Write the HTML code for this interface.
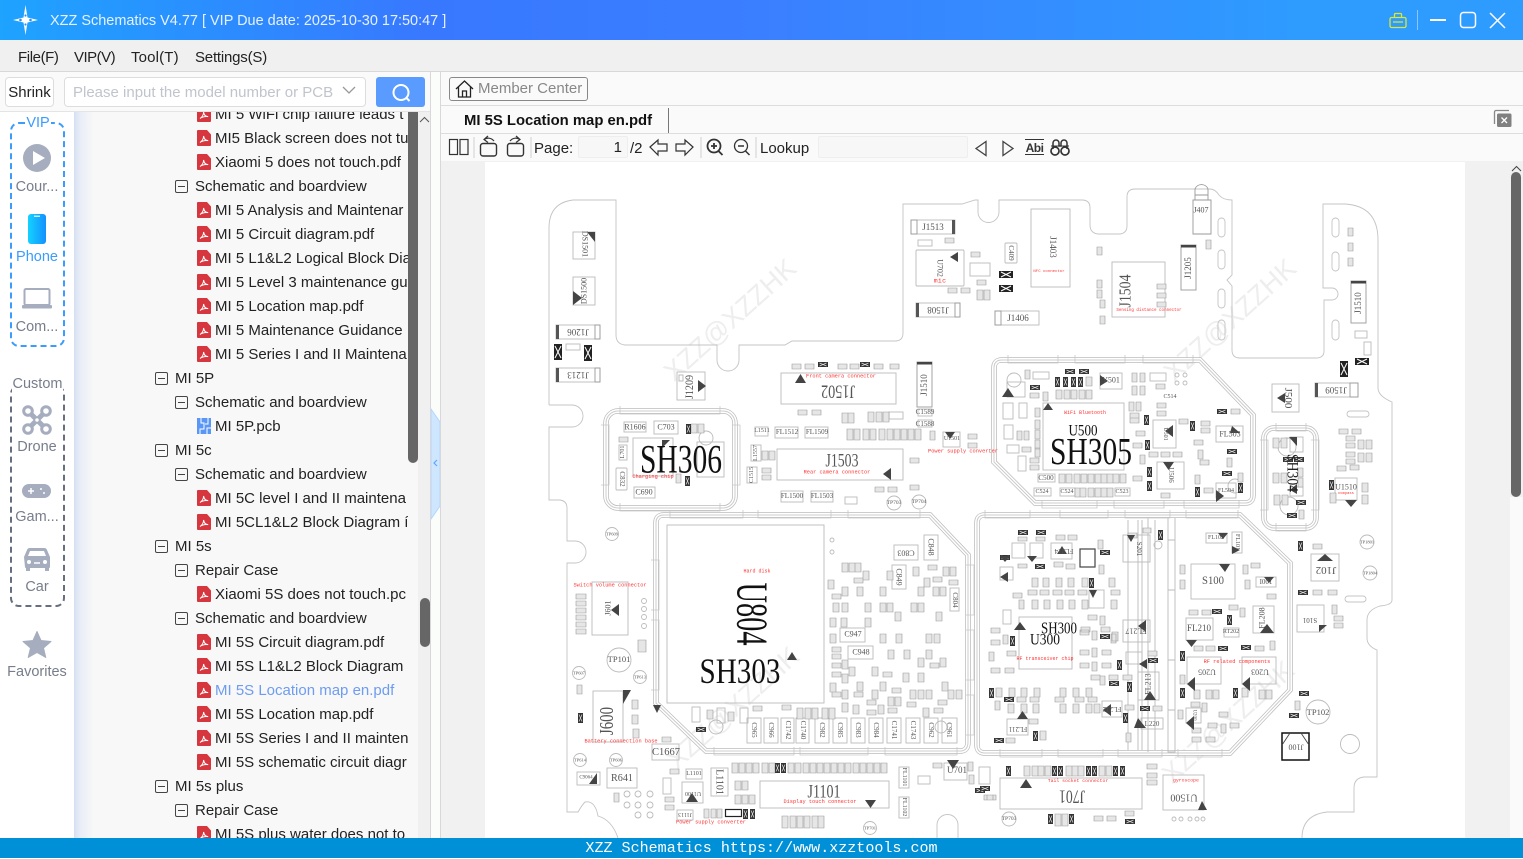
<!DOCTYPE html>
<html><head><meta charset="utf-8"><title>XZZ Schematics</title>
<style>
*{box-sizing:border-box}
html,body{margin:0;padding:0;width:1523px;height:858px;overflow:hidden;background:#fff;font-family:"Liberation Sans","Noto Sans CJK SC",sans-serif;font-size:15px;color:#222}
.a{position:absolute;white-space:nowrap}
#title{left:0;top:0;width:1523px;height:40px;background:linear-gradient(90deg,#1ea3ff 0,#3878ff 28%,#3a7fff 50%,#2e9bff 85%,#2e9bff 100%)}
#menu{left:0;top:40px;width:1523px;height:32px;background:#f0f0f0;border-bottom:1px solid #d8d8d8}
.lbl{color:#777d8c;font-size:14.5px;text-align:center;width:74px;left:0;line-height:18px}
#tree{left:74px;top:112px;width:334px;height:726px;overflow:hidden;background:linear-gradient(90deg,#d5e0f2 0,#e8edf6 6px,#f8f8f8 20px)}
.r{position:absolute;height:24px;line-height:24px;white-space:nowrap;left:0}
.m{display:inline-block;position:absolute;width:13px;height:13px;border:1px solid #444;border-radius:2px;top:6px;background:#f8f8f8}
.m:after{content:"";position:absolute;left:2px;right:2px;top:5px;height:1px;background:#444}
.l1 .m{left:81px}.l1 b{left:101px}
.l2 .m{left:101px}.l2 b{left:121px}
.l3 svg{position:absolute;left:123px;top:4px}.l3 b{left:141px}
.r b{font-weight:normal;position:absolute;top:1px}
#svgpcb{position:absolute;left:0;top:0}
#svgpcb text{text-anchor:middle;dominant-baseline:central;font-family:"Liberation Serif",serif;fill:#555}
#svgpcb text.d{fill:#111}
#svgpcb text.e{fill:#f33;font-family:"Liberation Mono",monospace;font-size:5.3px}
#svgpcb text.w{fill:#eee;font-family:"Liberation Sans",sans-serif;font-size:27px}
.tb{color:#222;font-size:15px;line-height:20px}
</style></head><body>

<svg width="0" height="0" style="position:absolute"><defs>
<symbol id="pdf" viewBox="0 0 14 16"><path d="M1 0h9l4 4.500V15a1 1 0 0 1-1 1H1a1 1 0 0 1-1-1V1a1 1 0 0 1 1-1z" fill="#d6363d"/><path d="M3 12.500c2-1 3.600-4 3.600-6.500 .4 3 2 4.500 4.600 4.600-3-.2-6 .2-8.200 1.900z" fill="none" stroke="#fff" stroke-width="1"/></symbol>
<symbol id="pcb" viewBox="0 0 14 16"><path d="M0 0h14v16H0z" fill="#5a96f5"/><path d="M4 0v5h3v6H3v5M11 0v6H8M14 10h-4v6" fill="none" stroke="#fff" stroke-width="1"/></symbol>
</defs></svg>

<!-- title bar -->
<div class="a" id="title"></div>
<svg class="a" style="left:10px;top:4px" width="32" height="32" viewBox="0 0 32 32"><path d="M15.500 1l2 12.500L28 16l-10.500 2.500-2 12.500-2-12.500L3 16l10.500-2.500z" fill="#fff"/><circle cx="10.500" cy="16" r="1.300" fill="#2b8cff"/><circle cx="20.500" cy="16" r="1.300" fill="#2b8cff"/><circle cx="15.500" cy="11.500" r="1.100" fill="#2b8cff"/><circle cx="15.500" cy="20.500" r="1.100" fill="#2b8cff"/></svg>
<div class="a" style="left:50px;top:12px;color:#e6f1ff;font-size:14.480px;line-height:18px">XZZ Schematics V4.77 [ VIP Due date: 2025-10-30 17:50:47 ]</div>
<svg class="a" style="left:1385px;top:8px" width="138" height="26" fill="none">
<path d="M6.500 9.500h13a1.500 1.500 0 0 1 1.500 1.500v7a1.500 1.500 0 0 1-1.500 1.500h-13a1.500 1.500 0 0 1-1.500-1.500v-7a1.500 1.500 0 0 1 1.500-1.500zM9.500 9.500V6.500a1 1 0 0 1 1-1h5a1 1 0 0 1 1 1v3M8 14h10" stroke="#d9e832" stroke-width="1.300"/>
<path d="M32.500 2v20" stroke="#8fc4ff"/>
<path d="M45 12h16" stroke="#fff" stroke-width="2"/>
<rect x="75.500" y="4.500" width="15" height="15" rx="3" stroke="#fff" stroke-width="1.500"/>
<path d="M105 5l15 15M120 5l-15 15" stroke="#fff" stroke-width="1.500"/>
</svg>

<!-- menu -->
<div class="a" id="menu"></div>
<div class="a tb" style="left:18px;top:48px;letter-spacing:-.4px">File(F)</div>
<div class="a tb" style="left:74px;top:48px;letter-spacing:-.5px">VIP(V)</div>
<div class="a tb" style="left:131px;top:48px;letter-spacing:.15px">Tool(T)</div>
<div class="a tb" style="left:195px;top:48px;letter-spacing:-.2px">Settings(S)</div>

<!-- left search row -->
<div class="a" style="left:0;top:72px;width:430px;height:40px;background:#fafafa;border-bottom:1px solid #e4e4e4"></div>
<div class="a" style="left:5px;top:77px;width:49px;height:30px;border:1px solid #ddd;border-radius:4px;background:#fff;text-align:center;line-height:30px;color:#222;font-size:15px">Shrink</div>
<div class="a" style="left:64px;top:77px;width:302px;height:30px;border:1px solid #ddd;border-radius:4px;background:#fff;line-height:30px;padding-left:8px;color:#c0c4cc;font-size:15px">Please input the model number or PCB</div>
<svg class="a" style="left:342px;top:86px" width="14" height="9" fill="none"><path d="M1 1l6 6 6-6" stroke="#999" stroke-width="1.300"/></svg>
<div class="a" style="left:376px;top:77px;width:49px;height:30px;background:#5a9bff;border-radius:3px"></div>
<svg class="a" style="left:389px;top:81px" width="24" height="23" fill="none"><circle cx="12" cy="11.500" r="7.500" stroke="#fff" stroke-width="2"/><path d="M17.500 17l3 3" stroke="#fff" stroke-width="2"/></svg>

<!-- sidebar -->
<div class="a" style="left:0;top:112px;width:74px;height:726px;background:#fff"></div>
<div class="a" style="left:10px;top:122px;width:55px;height:225px;border:2px dashed #3a9cff;border-radius:9px"></div>
<div class="a" style="left:25px;top:114px;width:26px;height:19px;background:#fff;color:#3a9cff;text-align:center;line-height:19px;font-size:14.5px">VIP</div>
<svg class="a" style="left:22px;top:143px" width="30" height="30"><circle cx="15" cy="15" r="14" fill="#a5adbe"/><path d="M11 8l12 7-12 7z" fill="#fff"/></svg>
<div class="a lbl" style="top:178px">Cour...</div>
<svg class="a" style="left:28px;top:214px" width="18" height="31"><defs><linearGradient id="ph" x1="0" x2="1" y1="0" y2="0"><stop offset="0" stop-color="#14d2ff"/><stop offset="1" stop-color="#1490ff"/></linearGradient></defs><rect width="18" height="30" rx="3" fill="url(#ph)"/><rect x="6" y="1.500" width="6" height="1.500" fill="#bfefff"/></svg>
<div class="a lbl" style="top:248px;color:#3a9cff">Phone</div>
<svg class="a" style="left:22px;top:288px" width="30" height="22"><rect x="2.500" y="1" width="25" height="16" rx="1.500" fill="#fff" stroke="#a5adbe" stroke-width="2"/><rect x="0" y="17" width="30" height="3.500" rx="1" fill="#a5adbe"/></svg>
<div class="a lbl" style="top:318px">Com...</div>

<div class="a" style="left:10px;top:385px;width:55px;height:222px;border:2px dashed #666f80;border-radius:9px"></div>
<div class="a" style="left:12px;top:375px;width:51px;height:19px;background:#fff;color:#777d8c;text-align:center;line-height:19px;font-size:14.5px">Custom</div>
<svg class="a" style="left:22px;top:405px" width="30" height="30" fill="none" stroke="#a5adbe"><circle cx="6" cy="6" r="4.300" stroke-width="3"/><circle cx="24" cy="6" r="4.300" stroke-width="3"/><circle cx="6" cy="24" r="4.300" stroke-width="3"/><circle cx="24" cy="24" r="4.300" stroke-width="3"/><path d="M8 8l14 14M22 8L8 22" stroke-width="5"/><circle cx="15" cy="15" r="2.500" fill="#fff" stroke-width="1.500"/></svg>
<div class="a lbl" style="top:438px">Drone</div>
<svg class="a" style="left:22px;top:483px" width="30" height="16"><rect width="29" height="14" y="1" rx="7" fill="#a5adbe"/><path d="M6 8h6M9 5v6" stroke="#fff" stroke-width="1.500"/><circle cx="19" cy="6" r="1" fill="#fff"/><circle cx="22" cy="10" r="1" fill="#fff"/></svg>
<div class="a lbl" style="top:508px">Gam...</div>
<svg class="a" style="left:22px;top:547px" width="30" height="25"><path d="M2 10l3-7a3 3 0 0 1 3-2h14a3 3 0 0 1 3 2l3 7v10a1 1 0 0 1-1 1v3h-4v-3H8v3H4v-3a1 1 0 0 1-1-1z" fill="#a5adbe"/><path d="M6 9l2-5h14l2 5z" fill="#fff"/><circle cx="7" cy="15" r="2" fill="#fff"/><circle cx="23" cy="15" r="2" fill="#fff"/><path d="M12 16h6" stroke="#fff" stroke-width="1.500"/></svg>
<div class="a lbl" style="top:578px">Car</div>
<svg class="a" style="left:22px;top:630px" width="30" height="29"><path d="M15 1.500l4 9 10 1-7.500 6.500 2.300 9.500-8.800-5-8.800 5 2.300-9.500L1 11.500l10-1z" fill="#a5adbe" stroke="#a5adbe" stroke-linejoin="round"/></svg>
<div class="a lbl" style="top:663px">Favorites</div>

<!-- tree -->
<div class="a" id="tree">
<div style="top:-10px" class="r l3"><svg width="14" height="16"><use href="#pdf"/></svg><b>MI 5 WiFi chip failure leads t</b></div>
<div style="top:14px" class="r l3"><svg width="14" height="16"><use href="#pdf"/></svg><b>MI5 Black screen does not tu</b></div>
<div style="top:38px" class="r l3"><svg width="14" height="16"><use href="#pdf"/></svg><b>Xiaomi 5 does not touch.pdf</b></div>
<div style="top:62px" class="r l2"><span class="m"></span><b>Schematic and boardview</b></div>
<div style="top:86px" class="r l3"><svg width="14" height="16"><use href="#pdf"/></svg><b>MI 5 Analysis and Maintenar</b></div>
<div style="top:110px" class="r l3"><svg width="14" height="16"><use href="#pdf"/></svg><b>MI 5 Circuit diagram.pdf</b></div>
<div style="top:134px" class="r l3"><svg width="14" height="16"><use href="#pdf"/></svg><b>MI 5 L1&amp;L2 Logical Block Dia</b></div>
<div style="top:158px" class="r l3"><svg width="14" height="16"><use href="#pdf"/></svg><b>MI 5 Level 3 maintenance gu</b></div>
<div style="top:182px" class="r l3"><svg width="14" height="16"><use href="#pdf"/></svg><b>MI 5 Location map.pdf</b></div>
<div style="top:206px" class="r l3"><svg width="14" height="16"><use href="#pdf"/></svg><b>MI 5 Maintenance Guidance</b></div>
<div style="top:230px" class="r l3"><svg width="14" height="16"><use href="#pdf"/></svg><b>MI 5 Series I and II Maintena</b></div>
<div style="top:254px" class="r l1"><span class="m"></span><b>MI 5P</b></div>
<div style="top:278px" class="r l2"><span class="m"></span><b>Schematic and boardview</b></div>
<div style="top:302px" class="r l3"><svg width="14" height="16"><use href="#pcb"/></svg><b>MI 5P.pcb</b></div>
<div style="top:326px" class="r l1"><span class="m"></span><b>MI 5c</b></div>
<div style="top:350px" class="r l2"><span class="m"></span><b>Schematic and boardview</b></div>
<div style="top:374px" class="r l3"><svg width="14" height="16"><use href="#pdf"/></svg><b>MI 5C level I and II maintena</b></div>
<div style="top:398px" class="r l3"><svg width="14" height="16"><use href="#pdf"/></svg><b>MI 5CL1&amp;L2 Block Diagram &iacute;</b></div>
<div style="top:422px" class="r l1"><span class="m"></span><b>MI 5s</b></div>
<div style="top:446px" class="r l2"><span class="m"></span><b>Repair Case</b></div>
<div style="top:470px" class="r l3"><svg width="14" height="16"><use href="#pdf"/></svg><b>Xiaomi 5S does not touch.pc</b></div>
<div style="top:494px" class="r l2"><span class="m"></span><b>Schematic and boardview</b></div>
<div style="top:518px" class="r l3"><svg width="14" height="16"><use href="#pdf"/></svg><b>MI 5S Circuit diagram.pdf</b></div>
<div style="top:542px" class="r l3"><svg width="14" height="16"><use href="#pdf"/></svg><b>MI 5S L1&amp;L2 Block Diagram</b></div>
<div style="top:566px" class="r l3"><svg width="14" height="16"><use href="#pdf"/></svg><b style="color:#6d9cf0">MI 5S Location map en.pdf</b></div>
<div style="top:590px" class="r l3"><svg width="14" height="16"><use href="#pdf"/></svg><b>MI 5S Location map.pdf</b></div>
<div style="top:614px" class="r l3"><svg width="14" height="16"><use href="#pdf"/></svg><b>MI 5S Series I and II mainten</b></div>
<div style="top:638px" class="r l3"><svg width="14" height="16"><use href="#pdf"/></svg><b>MI 5S schematic circuit diagr</b></div>
<div style="top:662px" class="r l1"><span class="m"></span><b>MI 5s plus</b></div>
<div style="top:686px" class="r l2"><span class="m"></span><b>Repair Case</b></div>
<div style="top:710px" class="r l3"><svg width="14" height="16"><use href="#pdf"/></svg><b>MI 5S plus water does not to</b></div>
</div>
<!-- tree scrollbars -->
<div class="a" style="left:408px;top:112px;width:10px;height:726px;background:#f8f8f8"></div>
<div class="a" style="left:408px;top:112px;width:10px;height:351px;background:#666;border-radius:0 0 5px 5px"></div>
<div class="a" style="left:418px;top:112px;width:12px;height:726px;background:#f0f0f0"></div>
<svg class="a" style="left:419px;top:116px" width="11" height="8" fill="none"><path d="M1 6l4.500-4.500L10 6" stroke="#555"/></svg>
<div class="a" style="left:419.500px;top:598px;width:10px;height:49px;background:#666;border-radius:5px"></div>

<!-- splitter -->
<div class="a" style="left:430px;top:72px;width:11px;height:766px;background:#fbfdfb;border-left:1px solid #d8d8d8;border-right:1px solid #d8d8d8"></div>
<svg class="a" style="left:431px;top:408px" width="9" height="112"><path d="M0 1l9 13v84L0 111z" fill="#cfe6ff" stroke="#b3d6ff"/><path d="M6 52l-3 3 3 3" fill="none" stroke="#5aa8ff" stroke-width="1.200"/></svg>

<!-- right head rows -->
<div class="a" style="left:441px;top:72px;width:1082px;height:34px;background:#fafafa;border-bottom:1px solid #ddd"></div>
<div class="a" style="left:449px;top:77px;width:139px;height:24px;border:1px solid #888;border-radius:3px;background:#fafafa"></div>
<svg class="a" style="left:455px;top:79px" width="19" height="20" fill="none" stroke="#222" stroke-width="1.300"><path d="M1 10l8.500-8L18 10M3.500 8v10h12V8M7.500 18v-6h4v6"/></svg>
<div class="a" style="left:478px;top:80px;color:#888;font-size:15px;line-height:18px">Member Center</div>
<div class="a" style="left:441px;top:106px;width:1082px;height:28px;background:#fafafa;border-bottom:1px solid #ddd"></div>
<div class="a" style="left:464px;top:112px;font-weight:bold;font-size:14.850px;line-height:18px;color:#111">MI 5S Location map en.pdf</div>
<div class="a" style="left:668px;top:108px;width:1px;height:25px;background:#777"></div>
<svg class="a" style="left:1493px;top:109px" width="20" height="20"><path d="M1.500 15V3a1.500 1.500 0 0 1 1.500-1.500h13" fill="none" stroke="#888" stroke-width="1.300"/><rect x="4" y="4.500" width="14.500" height="13.500" rx="1.500" fill="#808080"/><path d="M8.500 8.500l5.500 5.500M14 8.500l-5.500 5.500" stroke="#fff" stroke-width="1.300"/></svg>

<!-- toolbar -->
<div class="a" style="left:441px;top:134px;width:1082px;height:27px;background:#fafafa"></div>
<svg class="a" style="left:441px;top:134px" width="640" height="27" fill="none" stroke="#333" stroke-width="1.200">
<rect x="8.500" y="5.500" width="8" height="15"/><rect x="19" y="5.500" width="8" height="15"/>
<path d="M33 3v21M90 3v21M260 3v21M315 3v21" stroke="#d0d0d0" stroke-width="1"/>
<rect x="39.500" y="9.500" width="16" height="12.500" rx="2.500" stroke-width="1.400"/><path d="M53 7C50 3.500 46 3.500 43 5.500M47 2l-4 3.500 4 3" stroke-width="1.200"/>
<rect x="66.500" y="9.500" width="16" height="12.500" rx="2.500" stroke-width="1.400"/><path d="M69 7c3-3.500 7-3.500 10-1.500M75 2l4 3.500-4 3"/>
<path d="M209 13l8-7v4h9v7h-9v4z"/><path d="M252 13l-8-7v4h-9v7h9v4z"/>
<circle cx="273" cy="12" r="6.500" stroke-width="1.800"/><path d="M277.500 17l4 4M270 12h6M273 9v6" stroke-width="1.800"/>
<circle cx="300" cy="12" r="6.500" stroke-width="1.300"/><path d="M304.500 17l4 4M297 12h6" stroke-width="1.500"/>
<path d="M545 7.500v14l-10-7zM562 7.500v14l10-7z" stroke-width="1.300" stroke="#444"/>
</svg>
<div class="a tb" style="left:534px;top:139px">Page:</div>
<div class="a" style="left:578px;top:136px;width:50px;height:22px;background:#f7f7f7;border:1px solid #eee;border-radius:2px;text-align:right;padding-right:5px;line-height:22px;font-size:15px">1</div>
<div class="a tb" style="left:630px;top:139px">/2</div>
<div class="a tb" style="left:760px;top:139px">Lookup</div>
<div class="a" style="left:818px;top:136px;width:150px;height:22px;background:#f7f7f7;border:1px solid #eee;border-radius:2px"></div>
<svg class="a" style="left:1024px;top:138px" width="48" height="20" fill="none" stroke="#333"><path d="M1 1.500h19M1 16.500h19" stroke-width="1"/><text x="10.500" y="14" text-anchor="middle" font-family="Liberation Sans" font-weight="bold" font-size="12" letter-spacing="-.5" fill="#333" stroke="none">Abi</text><path d="M29 11v-6a3 3 0 0 1 6 0v3h2v-3a3 3 0 0 1 6 0v6" stroke-width="1.500"/><circle cx="31" cy="13" r="4" stroke-width="1.700"/><circle cx="41" cy="13" r="4" stroke-width="1.700"/><path d="M27 8h18" stroke-width="1"/></svg>

<!-- canvas -->
<div class="a" style="left:441px;top:161px;width:1069px;height:677px;background:#f1f1f1"></div>
<div class="a" style="left:485px;top:162px;width:980px;height:676px;background:#fff"></div>
<div class="a" style="left:1510px;top:161px;width:13px;height:336px;background:#f0f0f0"></div>
<div class="a" style="left:1510px;top:497px;width:13px;height:341px;background:#fafafa"></div>
<svg class="a" style="left:1511px;top:165px" width="11" height="7" fill="none"><path d="M1 6l4.500-4.500L10 6" stroke="#444"/></svg>
<div class="a" style="left:1511px;top:172px;width:10px;height:325px;background:#666;border-radius:5px"></div>

<!-- PCB -->
<svg id="svgpcb" width="1523" height="858" viewBox="0 0 1523 858" fill="none">
<defs>
<clipPath id="cp"><rect x="485" y="162" width="980" height="676"/></clipPath>
<g id="kk"><rect width="8" height="16" fill="#222"/><path d="M1 2l6 12M7 2l-6 12" stroke="#fff" stroke-width="1"/></g>
<g id="KK"><rect width="14" height="7" fill="#222"/><path d="M2 1l10 5M2 6l10-5" stroke="#fff" stroke-width="1"/></g>
<g id="k"><rect width="5" height="10" fill="#333"/><path d="M1 1.500l3 7M4 1.500l-3 7" stroke="#ddd" stroke-width=".7"/></g>
<g id="K"><rect width="10" height="5" fill="#333"/><path d="M1.500 1l7 3M1.500 4l7-3" stroke="#ddd" stroke-width=".7"/></g>
<path id="sh303" d="M664 515H930L968 555V742Q968 751 960 751H706L656 703V523Q656 515 664 515Z"/>
<path id="shrf" d="M985 515H1240L1290 563V690L1230 753H985Q977 753 977 745V523Q977 515 985 515Z"/>
<path id="sh305" d="M1002 360H1200L1253 415V495Q1253 503 1245 503H1035L994 462V368Q994 360 1002 360Z"/>
<rect id="sh306" x="606" y="411" width="129" height="97" rx="12"/>
<rect id="sh304" x="1264" y="428" width="52" height="100" rx="10"/>
</defs>
<g clip-path="url(#cp)">
<!-- watermarks -->
<text class="w" transform="rotate(-42 730 320)" x="730" y="320">XZZ@XZZHK</text>
<text class="w" transform="rotate(-42 1230 320)" x="1230" y="320">XZZ@XZZHK</text>
<text class="w" transform="rotate(-42 733 708)" x="733" y="708">XZZ@XZZHK</text>
<text class="w" transform="rotate(-42 1228 722)" x="1228" y="722">XZZ@XZZHK</text>

<!-- board outline -->
<g stroke="#c4c4c4" stroke-width=".9">
<path d="M549 405V228Q549 203 573 200H616V335Q616 344 625 345H717V360A11 11 0 0 0 739 360V345H785L792 341H895Q903 341 903 333V204H962L975 200H978V212A10.500 10.500 0 0 0 999 212V200H1082Q1090 200 1090 208V225Q1090 233 1098 234H1120Q1127 233 1127 226V197Q1127 189 1135 189H1210Q1215 189 1219 195Q1223 200 1232 200V275L1227 280L1232 286V350Q1232 358 1240 358H1316Q1324 358 1324 351V300H1332A6 6 0 0 0 1332 288H1323V204H1345Q1378 206 1378 240V388Q1378 396 1392 402V600Q1392 605 1380 606Q1367 610 1367 620V638Q1367 646 1377 650V777H1364Q1354 778 1354 788V812H1327Q1302 815 1302 838"/>
<path d="M549 405H572A11 11 0 0 1 572 427H549V500H560Q567 501 567 508V541H575A11 11 0 0 1 575 563H567V812H578Q582 805 585 802Q595 800 598 816Q612 820 618 838"/>
<path d="M937 838V825A10 10 0 0 1 958 825V838"/>
<rect x="1218" y="218" width="7" height="19" rx="3.500"/><rect x="1218" y="250" width="7" height="19" rx="3.500"/><rect x="1218" y="289" width="7" height="19" rx="3.500"/><rect x="1218" y="320" width="7" height="20" rx="3.500"/>
<rect x="1332" y="218" width="7" height="19" rx="3.500"/><rect x="1332" y="252" width="7" height="19" rx="3.500"/><rect x="1332" y="320" width="7" height="20" rx="3.500"/>
<rect x="1347" y="411" width="22" height="6" rx="3"/><rect x="1345" y="596" width="21" height="6" rx="3"/>
</g>

<!-- shields -->
<g fill="none">
<use href="#sh303" stroke="#bbb" stroke-width="5.500"/><use href="#sh303" stroke="#fff" stroke-width="4"/><use href="#sh303" stroke="#ccc" stroke-width="1"/>
<use href="#shrf" stroke="#bbb" stroke-width="5.500"/><use href="#shrf" stroke="#fff" stroke-width="4"/><use href="#shrf" stroke="#ccc" stroke-width="1"/>
<use href="#sh305" stroke="#bbb" stroke-width="5.500"/><use href="#sh305" stroke="#fff" stroke-width="4"/><use href="#sh305" stroke="#ccc" stroke-width="1"/>
<use href="#sh306" stroke="#bbb" stroke-width="5.500"/><use href="#sh306" stroke="#fff" stroke-width="4"/><use href="#sh306" stroke="#ccc" stroke-width="1"/>
<use href="#sh304" stroke="#bbb" stroke-width="5.500"/><use href="#sh304" stroke="#fff" stroke-width="4"/><use href="#sh304" stroke="#ccc" stroke-width="1"/>
<path d="M1142 520V750M1148 518V752M1168 518V752H1175V518M1128 520V750M1138 520V750M1155 520V750" stroke="#bbb" stroke-width=".9"/>
<path d="M1168 540h7M1168 590h7M1168 660h7M1168 710h7" stroke="#bbb"/>
<path d="M670 510v8h73v-8M758 510v8h73v-8M848 510v8h72v-8M714 747v8h80v-8M800 747v8h68v-8M885 747v8h72v-8M651 560h8v50h-8M651 620h8v70h-8M966 565h8v50h-8M966 630h8v50h-8M966 695h8v40h-8" stroke="#c8c8c8" stroke-width=".8"/>
<path d="M1008 355v8h50v-8M1075 355v8h50v-8M1143 355v8h50v-8M1042 500v8h55v-8M1114 500v8h50v-8M1184 500v8h55v-8" stroke="#c8c8c8" stroke-width=".8"/>
<path d="M620 406v8h100v-8M620 503v8h100v-8M601 425h8v60h-8M732 425h8v60h-8M1276 423v8h30v-8M1276 523v8h30v-8M1260 440h8v70h-8M1311 440h8v70h-8" stroke="#c8c8c8" stroke-width=".8"/>
<path d="M985 510v8h45v-8M1060 510v8h48v-8M1125 510v8h45v-8M1186 510v8h52v-8M1000 749v8h42v-8M1058 749v8h45v-8M1118 749v8h44v-8M1178 749v8h44v-8" stroke="#c8c8c8" stroke-width=".8"/>
</g>

<!-- boxes -->
<g stroke="#bbb" stroke-width=".9">
<rect x="667" y="525" width="157" height="178"/>
<rect x="573" y="232" width="22" height="27"/><rect x="573" y="277" width="22" height="28"/>
<rect x="556" y="325" width="44" height="14"/><rect x="556" y="368" width="44" height="14"/><rect x="911" y="220" width="44" height="14"/><rect x="916" y="303" width="44" height="14"/><rect x="995" y="311" width="44" height="14"/><rect x="1315" y="383" width="43" height="14"/>
<rect x="566" y="344" width="14" height="6"/><rect x="677" y="372" width="28" height="28"/>
<rect x="916" y="250" width="48" height="36" rx="1"/><rect x="1031" y="209" width="39" height="78"/><rect x="1005" y="243" width="12" height="20" rx="1"/>
<rect x="1112" y="262" width="53" height="55"/><rect x="781" y="373" width="115" height="31"/><rect x="777" y="449" width="126" height="31"/>
<rect x="775" y="427" width="23" height="11"/><rect x="805" y="427" width="23" height="11"/><rect x="755" y="427" width="13" height="9"/><rect x="781" y="491" width="22" height="11"/><rect x="811" y="491" width="22" height="11"/><rect x="943" y="432" width="17" height="15"/>
<rect x="624" y="422" width="22" height="10"/><rect x="654" y="421" width="24" height="13"/><rect x="633" y="438" width="40" height="38"/><rect x="697" y="442" width="27" height="35"/><rect x="634" y="487" width="21" height="11"/><rect x="616" y="468" width="11" height="22" rx="1"/><rect x="619" y="445" width="8" height="15"/>
<rect x="1043" y="403" width="81" height="67"/><rect x="1100" y="373" width="22" height="16"/><rect x="1153" y="420" width="23" height="28"/><rect x="1157" y="462" width="27" height="27"/><rect x="1216" y="426" width="27" height="16"/><rect x="1216" y="483" width="20" height="15"/>
<rect x="1038" y="474" width="17" height="8"/><rect x="1034" y="488" width="17" height="8"/><rect x="1060" y="488" width="15" height="8"/><rect x="1115" y="488" width="15" height="8"/><rect x="1007" y="382" width="18" height="15"/><rect x="1272" y="384" width="27" height="28"/><rect x="1003" y="403" width="10" height="16"/><rect x="1019" y="403" width="8" height="15"/><rect x="1004" y="425" width="9" height="14"/><rect x="1007" y="445" width="12" height="8"/><rect x="1018" y="456" width="8" height="15"/><rect x="1033" y="372" width="16" height="7"/><rect x="1150" y="373" width="16" height="8"/>
<rect x="1290" y="437" width="13" height="15"/><rect x="1290" y="487" width="13" height="9"/><rect x="1335" y="478" width="22" height="22"/><rect x="1311" y="554" width="28" height="27"/><rect x="1297" y="605" width="27" height="27"/>
<rect x="1123" y="535" width="27" height="27"/><rect x="1191" y="564" width="44" height="35"/><rect x="1206" y="533" width="21" height="10"/><rect x="1232" y="532" width="10" height="21"/><rect x="1256" y="577" width="20" height="10"/><rect x="1186" y="618" width="27" height="22"/><rect x="1253" y="606" width="21" height="27"/><rect x="1224" y="628" width="15" height="9"/>
<rect x="1019" y="617" width="53" height="52"/><rect x="1051" y="543" width="21" height="16"/><rect x="1123" y="620" width="27" height="22"/><rect x="1138" y="672" width="21" height="28"/><rect x="1102" y="701" width="20" height="16"/><rect x="1007" y="719" width="21" height="16"/><rect x="1187" y="657" width="34" height="27"/><rect x="1242" y="657" width="34" height="27"/><rect x="1186" y="708" width="15" height="15"/>
<rect x="1012" y="543" width="13" height="15"/><rect x="1030" y="543" width="13" height="15"/><rect x="1000" y="567" width="13" height="13"/><rect x="1089" y="590" width="15" height="18"/><rect x="1003" y="610" width="8" height="14"/><rect x="1126" y="652" width="16" height="12"/><rect x="1141" y="718" width="22" height="11"/>
<rect x="1000" y="778" width="142" height="31"/><rect x="1163" y="775" width="41" height="35"/>
<rect x="747" y="718" width="14" height="25"/><rect x="764" y="718" width="14" height="25"/><rect x="781" y="718" width="13" height="25"/><rect x="796" y="718" width="13" height="25"/><rect x="815" y="718" width="14" height="25"/><rect x="833" y="718" width="14" height="25"/><rect x="851" y="718" width="14" height="25"/><rect x="869" y="718" width="14" height="25"/><rect x="887" y="718" width="14" height="25"/><rect x="906" y="718" width="14" height="25"/><rect x="924" y="718" width="14" height="25"/><rect x="942" y="718" width="15" height="25"/>
<rect x="894" y="545" width="24" height="15"/><rect x="924" y="535" width="14" height="25"/><rect x="892" y="565" width="14" height="24"/><rect x="950" y="588" width="9" height="23"/><rect x="840" y="628" width="25" height="14"/><rect x="848" y="646" width="25" height="13"/>
<rect x="592" y="582" width="36" height="53"/><rect x="593" y="691" width="30" height="51"/><rect x="652" y="744" width="27" height="16"/><rect x="607" y="768" width="30" height="20"/><rect x="577" y="772" width="23" height="13"/><rect x="711" y="768" width="17" height="28"/><rect x="682" y="782" width="21" height="21"/><rect x="760" y="781" width="129" height="27"/><rect x="899" y="767" width="10" height="21"/><rect x="899" y="797" width="10" height="21"/><rect x="944" y="763" width="23" height="17"/><rect x="686" y="769" width="16" height="10"/><rect x="677" y="810" width="16" height="10"/><rect x="663" y="778" width="8" height="16"/><rect x="692" y="707" width="8" height="15"/><rect x="717" y="708" width="8" height="15"/><rect x="740" y="708" width="8" height="15"/><rect x="918" y="776" width="12" height="8"/><rect x="979" y="767" width="11" height="17"/>
<rect x="970" y="263" width="20" height="13"/><rect x="751" y="445" width="10" height="16"/><rect x="747" y="467" width="10" height="16"/><rect x="889" y="412" width="14" height="7"/><rect x="918" y="409" width="14" height="7"/><rect x="918" y="420" width="14" height="7"/><rect x="845" y="497" width="12" height="7"/><rect x="918" y="240" width="14" height="6"/><rect x="1355" y="331" width="12" height="7"/><rect x="1364" y="342" width="7" height="13"/>
<circle cx="894" cy="503" r="7"/><circle cx="919" cy="502" r="7"/><circle cx="706" cy="438" r="7"/><circle cx="612" cy="534" r="6.500"/><circle cx="579" cy="673" r="6.500"/><circle cx="640" cy="677" r="6.500"/><circle cx="580" cy="760" r="6.500"/><circle cx="616" cy="760" r="6.500"/><circle cx="870" cy="828" r="6.500"/><circle cx="619" cy="660" r="12"/><circle cx="1367" cy="542" r="7"/><circle cx="1370" cy="573" r="7"/><circle cx="1318" cy="712" r="12"/><circle cx="1350" cy="744" r="9.500"/><circle cx="1009" cy="819" r="7"/><circle cx="1014" cy="380" r="7"/><circle cx="1287" cy="447" r="9"/><circle cx="1289" cy="506" r="9"/><circle cx="716" cy="727" r="7"/><circle cx="1158" cy="545" r="4"/><circle cx="941" cy="727" r="6"/><circle cx="1235" cy="486" r="7"/>
<circle cx="644" cy="601" r="2.500"/><circle cx="644" cy="609" r="2.500"/><circle cx="644" cy="617" r="2.500"/><circle cx="644" cy="626" r="2.500"/><circle cx="627" cy="794" r="3"/><circle cx="638" cy="794" r="3"/><circle cx="650" cy="794" r="3"/><circle cx="627" cy="805" r="3"/><circle cx="638" cy="805" r="3"/><circle cx="650" cy="805" r="3"/><circle cx="638" cy="815" r="3"/><circle cx="650" cy="815" r="3"/><circle cx="1177" cy="375" r="2"/><circle cx="1185" cy="375" r="2"/><circle cx="1177" cy="383" r="2"/><circle cx="1185" cy="383" r="2"/><circle cx="832" cy="540" r="2"/><circle cx="832" cy="552" r="2"/>
<circle cx="1174" cy="819" r="2"/><circle cx="1181" cy="819" r="2"/><circle cx="1190" cy="819" r="2"/><circle cx="1197" cy="819" r="2"/><circle cx="1203" cy="819" r="2"/>
</g>
<!-- small parts -->
<path fill="#e6e6e6" stroke="#999" stroke-width=".6" d="
M842 563h6v9h-6zM849 563h6v9h-6zM855 563h6v9h-6zM863 571h6v9h-6zM887 571h6v9h-6zM913 567h6v9h-6zM928 565h9v5h-9zM943 567h6v9h-6zM950 567h6v9h-6zM933 577h9v5h-9zM949 580h9v5h-9zM924 578h6v9h-6zM933 587h6v9h-6zM940 587h6v9h-6zM828 580h6v9h-6zM842 587h6v9h-6zM857 587h6v9h-6zM880 587h6v9h-6zM918 587h6v9h-6zM854 578h9v5h-9zM832 594h9v5h-9z
M833 603h6v9h-6zM842 603h6v9h-6zM865 603h6v9h-6zM880 603h6v9h-6zM887 603h6v9h-6zM911 603h6v9h-6zM918 603h6v9h-6zM830 618h6v9h-6zM841 618h6v9h-6zM865 618h6v9h-6zM895 612h6v9h-6zM936 612h6v9h-6zM830 634h6v9h-6zM880 634h6v9h-6zM896 634h6v9h-6zM926 634h6v9h-6zM934 634h6v9h-6z
M832 647h9v5h-9zM832 654h9v5h-9zM832 663h9v5h-9zM832 672h9v5h-9zM842 660h6v9h-6zM842 674h6v9h-6zM849 667h6v9h-6zM888 650h6v9h-6zM904 650h6v9h-6zM926 650h6v9h-6zM918 658h6v9h-6zM940 658h6v9h-6zM930 663h9v5h-9zM872 667h6v9h-6zM883 672h9v5h-9zM903 673h6v9h-6zM918 673h6v9h-6z
M830 683h6v9h-6zM857 682h6v9h-6zM880 682h6v9h-6zM942 682h6v9h-6zM842 690h6v9h-6zM832 692h9v5h-9zM854 692h9v5h-9zM872 690h6v9h-6zM892 688h9v5h-9zM910 690h6v9h-6zM918 690h6v9h-6zM926 690h6v9h-6zM948 690h6v9h-6zM956 690h6v9h-6zM888 697h6v9h-6zM895 697h6v9h-6zM907 702h9v5h-9zM938 700h9v5h-9zM842 703h6v9h-6zM853 705h6v9h-6zM867 700h9v5h-9zM867 710h9v5h-9zM878 705h6v9h-6zM888 708h9v5h-9zM923 708h6v9h-6zM934 708h9v5h-9zM797 708h6v11h-6zM805 708h6v11h-6zM812 708h6v11h-6zM822 708h6v11h-6zM829 708h6v11h-6zM753 706h9v5h-9zM782 705h9v5h-9zM707 710h6v9h-6zM728 712h6v9h-6z
M732 763h6v10h-6zM739 763h6v10h-6zM746 763h6v10h-6zM753 763h6v10h-6zM762 763h6v10h-6zM769 763h6v10h-6zM788 763h6v10h-6zM795 763h6v10h-6zM803 763h6v10h-6zM810 763h6v10h-6zM817 763h6v10h-6zM824 763h6v10h-6zM831 763h6v10h-6zM838 763h6v10h-6zM845 763h6v10h-6zM853 763h6v10h-6zM860 763h6v10h-6zM867 763h6v10h-6zM874 763h6v10h-6zM881 763h6v10h-6z
M576 594h10v5h-10zM576 601h10v5h-10zM576 608h10v5h-10zM576 615h10v5h-10zM576 622h10v5h-10zM576 629h10v5h-10zM638 640h8v12h-8zM577 685h5v9h-5zM632 700h6v9h-6zM632 715h6v9h-6zM633 729h6v9h-6zM670 769h9v5h-9zM665 797h9v5h-9zM665 805h9v5h-9zM614 793h5v9h-5zM704 809h5v9h-5zM711 809h5v9h-5zM717 809h5v9h-5zM735 781h6v9h-6zM742 781h6v9h-6zM735 795h6v9h-6zM742 795h6v9h-6zM749 795h6v9h-6zM782 816h6v12h-6zM790 816h6v12h-6zM797 816h6v12h-6zM804 816h6v12h-6zM812 816h6v12h-6zM818 816h6v12h-6zM933 763h9v5h-9zM968 762h5v9h-5zM969 775h5v9h-5zM987 795h9v5h-9zM662 737h9v5h-9z
M1018 537h9v4h-9zM1036 537h9v4h-9zM1056 535h9v5h-9zM1068 535h9v5h-9zM1018 564h9v4h-9zM1054 562h9v5h-9zM1066 564h9v5h-9zM1098 540h5v9h-5zM1099 565h5v9h-5zM1128 533h9v5h-9zM1143 528h8v5h-8z
M1032 578h6v9h-6zM1043 578h6v9h-6zM1056 578h6v9h-6zM1068 578h6v9h-6zM1082 578h6v9h-6zM1109 578h6v9h-6zM1028 590h9v5h-9zM1040 590h9v5h-9zM1053 590h9v5h-9zM1065 590h9v5h-9zM1078 590h9v5h-9zM1111 590h9v5h-9zM1013 593h9v5h-9zM1019 600h5v9h-5zM1032 600h6v9h-6zM1044 600h6v9h-6zM1057 600h6v9h-6zM1069 600h6v9h-6zM1082 600h6v9h-6zM1111 600h6v9h-6z
M1088 615h9v5h-9zM1100 616h5v9h-5zM1081 627h9v5h-9zM1101 627h9v5h-9zM1112 632h6v9h-6zM991 628h9v5h-9zM991 640h9v5h-9zM989 652h5v9h-5zM991 668h9v5h-9zM1005 668h9v5h-9zM1007 651h9v5h-9zM1003 635h5v9h-5zM1092 631h5v9h-5zM1111 634h5v9h-5zM1080 630h9v5h-9zM1080 650h9v5h-9zM1092 648h5v9h-5zM1102 650h9v5h-9zM1080 663h9v5h-9zM1092 662h5v9h-5zM1102 663h9v5h-9zM1091 675h9v5h-9zM1100 676h5v9h-5zM1109 675h9v5h-9zM1123 675h9v5h-9z
M996 688h6v9h-6zM1009 688h6v9h-6zM1021 688h6v9h-6zM1034 688h6v9h-6zM1060 688h6v9h-6zM1073 688h6v9h-6zM1086 688h6v9h-6zM1017 697h9v5h-9zM1030 697h9v5h-9zM1055 697h9v5h-9zM1075 697h9v5h-9zM1088 697h9v5h-9zM995 701h5v9h-5zM1008 704h6v9h-6zM1021 704h6v9h-6zM1033 704h6v9h-6zM1060 704h6v9h-6zM1073 704h6v9h-6zM1086 704h6v9h-6zM1094 704h6v9h-6zM1029 719h9v5h-9zM1040 731h6v9h-6zM1006 738h9v5h-9zM1125 705h9v5h-9zM1153 706h9v5h-9zM1126 733h5v9h-5zM1148 651h9v5h-9z
M1194 646h9v5h-9zM1206 646h9v5h-9zM1255 646h9v5h-9zM1270 641h5v9h-5zM1189 610h9v5h-9zM1202 610h9v5h-9zM1229 605h9v5h-9zM1240 608h5v9h-5zM1180 565h5v9h-5zM1180 580h5v9h-5zM1243 565h5v9h-5zM1251 563h9v5h-9zM1245 580h5v9h-5zM1267 594h9v5h-9zM1180 675h5v9h-5zM1194 690h6v9h-6zM1206 690h6v9h-6zM1213 690h6v9h-6zM1242 688h6v9h-6zM1259 690h6v9h-6zM1266 690h6v9h-6zM1191 702h9v5h-9zM1202 703h5v9h-5zM1178 710h5v9h-5zM1219 712h9v5h-9zM1208 723h9v5h-9zM1221 724h5v9h-5zM1230 723h9v5h-9zM1192 728h9v5h-9zM1192 737h9v5h-9zM1206 737h9v5h-9z
M1024 766h6v10h-6zM1032 766h6v10h-6zM1038 766h6v10h-6zM1045 766h6v10h-6zM1066 766h6v10h-6zM1072 766h6v10h-6zM1078 766h6v10h-6zM1099 766h6v10h-6zM1106 766h6v10h-6zM1147 764h10v5h-10zM1147 773h10v5h-10zM1147 780h10v5h-10zM984 795h9v5h-9zM1055 814h6v12h-6zM1062 814h6v12h-6zM1094 816h9v5h-9zM1107 816h9v5h-9zM1125 811h9v5h-9zM1295 701h5v9h-5z
M1025 370h5v9h-5zM1030 393h9v5h-9zM1043 392h5v9h-5zM1086 377h6v9h-6zM1056 390h6v9h-6zM1064 390h6v9h-6zM1071 390h6v9h-6zM1079 390h6v9h-6zM1086 390h6v9h-6zM1132 373h5v9h-5zM1140 373h5v9h-5zM1132 386h5v9h-5zM1140 386h5v9h-5zM1156 384h9v5h-9zM1129 402h5v9h-5zM1136 402h5v9h-5zM1157 403h9v5h-9zM1157 411h9v5h-9zM1231 409h9v5h-9zM1130 413h9v5h-9zM1130 418h9v5h-9zM1179 419h9v5h-9zM1201 421h9v5h-9zM1201 428h9v5h-9zM1136 431h9v5h-9zM1194 440h9v5h-9zM1133 443h9v5h-9zM1198 450h5v9h-5zM1149 452h9v5h-9zM1161 452h9v5h-9zM1173 452h9v5h-9zM1140 455h5v9h-5zM1200 460h9v5h-9zM1227 458h5v9h-5zM1133 476h9v5h-9zM1238 473h5v9h-5zM1195 475h5v9h-5zM1204 488h9v5h-9zM1161 493h9v5h-9z
M1059 474h6v9h-6zM1066 474h6v9h-6zM1074 474h6v9h-6zM1081 474h6v9h-6zM1088 474h6v9h-6zM1095 474h6v9h-6zM1101 474h6v9h-6zM1107 474h6v9h-6zM1113 474h6v9h-6zM1120 474h6v9h-6zM1075 488h5v9h-5zM1080 488h6v9h-6zM1088 488h6v9h-6zM1095 488h6v9h-6zM1101 488h6v9h-6zM1107 488h6v9h-6z
M1035 408h5v9h-5zM1035 420h5v9h-5zM1035 430h5v9h-5zM1035 440h5v9h-5zM1035 448h5v9h-5zM1030 458h9v5h-9zM1030 465h9v5h-9zM1017 431h5v9h-5zM1024 431h5v9h-5zM1022 447h9v5h-9z
M1273 438h6v10h-6zM1281 438h6v10h-6zM1273 473h6v10h-6zM1281 473h6v10h-6zM1298 468h5v9h-5zM1298 478h5v9h-5zM1274 495h6v10h-6zM1282 495h6v10h-6zM1299 510h5v9h-5zM1339 429h9v5h-9zM1352 429h9v5h-9zM1346 436h9v5h-9zM1346 443h9v5h-9zM1346 452h9v5h-9zM1346 459h9v5h-9zM1358 440h6v9h-6zM1366 440h6v9h-6zM1358 453h6v9h-6zM1366 453h6v9h-6zM1337 466h9v5h-9zM1350 465h9v5h-9zM1330 493h6v10h-6zM1362 483h6v9h-6zM1362 495h6v9h-6zM1313 544h9v5h-9zM1313 590h9v5h-9zM1328 590h9v5h-9zM1332 605h5v9h-5zM1334 616h9v5h-9zM1334 623h9v5h-9z
M792 364h9v5h-9zM805 364h9v5h-9zM838 364h9v5h-9zM850 364h9v5h-9zM874 364h9v5h-9zM890 364h9v5h-9zM798 410h9v5h-9zM812 410h9v5h-9zM842 413h6v10h-6zM848 413h6v10h-6zM868 412h6v10h-6zM876 412h6v10h-6zM883 412h6v10h-6z
M847 429h6v11h-6zM854 429h6v11h-6zM863 429h6v11h-6zM870 429h6v11h-6zM879 429h6v11h-6zM887 429h6v11h-6zM894 429h6v11h-6zM901 429h6v11h-6zM908 429h6v11h-6zM915 429h6v11h-6zM930 431h5v9h-5zM968 434h9v5h-9zM968 443h9v5h-9zM910 458h9v5h-9zM910 485h9v5h-9zM875 487h9v5h-9zM888 487h9v5h-9zM762 451h6v9h-6zM769 451h6v9h-6zM762 468h9v5h-9zM762 475h9v5h-9zM619 437h9v5h-9zM691 424h6v9h-6zM698 424h6v9h-6zM676 474h5v9h-5z
M945 238h9v5h-9zM971 252h9v5h-9zM977 280h9v5h-9zM948 288h9v5h-9zM961 288h9v5h-9zM977 290h6v10h-6zM984 290h6v10h-6zM1097 247h5v8h-5zM1097 280h5v8h-5zM1097 290h5v8h-5zM1100 300h5v8h-5zM1100 316h5v8h-5zM1157 284h9v5h-9zM1157 293h9v5h-9zM1157 302h9v5h-9zM1206 240h5v9h-5zM1348 228h5v8h-5zM1348 243h5v8h-5zM1348 258h5v8h-5z"/>
<!-- black parts -->
<use href="#kk" x="554" y="344"/><use href="#kk" x="584" y="345"/><use href="#KK" x="999" y="271"/><use href="#KK" x="999" y="285"/><use href="#K" x="818" y="362"/><use href="#K" x="860" y="362"/><use href="#k" x="686" y="424"/><use href="#k" x="685" y="476"/><use href="#k" x="578" y="713"/><use href="#K" x="696" y="727"/><use href="#k" x="743" y="809"/><use href="#k" x="750" y="809"/><use href="#k" x="775" y="763"/><use href="#k" x="781" y="763"/><use href="#K" x="975" y="788"/>
<use href="#K" x="1065" y="369"/><use href="#K" x="1079" y="369"/><use href="#k" x="1055" y="377"/><use href="#k" x="1063" y="377"/><use href="#k" x="1071" y="377"/><use href="#k" x="1078" y="377"/><use href="#K" x="1030" y="385"/><use href="#k" x="1144" y="415"/><use href="#k" x="1190" y="421"/><use href="#K" x="1217" y="409"/><use href="#k" x="1145" y="440"/><use href="#K" x="1227" y="449"/><use href="#k" x="1147" y="467"/><use href="#K" x="1222" y="471"/><use href="#k" x="1147" y="481"/><use href="#k" x="1195" y="487"/><use href="#k" x="1238" y="483"/>
<use href="#K" x="1283" y="457"/><use href="#K" x="1294" y="457"/><use href="#K" x="1296" y="500"/><use href="#K" x="1287" y="513"/><use href="#k" x="1329" y="480"/><use href="#k" x="1298" y="541"/><use href="#K" x="1298" y="590"/><use href="#kk" x="1340" y="361"/><use href="#KK" x="1355" y="358"/>
<use href="#K" x="1018" y="530"/><use href="#K" x="1036" y="530"/><use href="#K" x="1000" y="555"/><use href="#K" x="1035" y="564"/><use href="#K" x="1100" y="550"/><use href="#k" x="1089" y="578"/><use href="#K" x="1100" y="634"/><use href="#k" x="1010" y="636"/><use href="#k" x="1117" y="660"/><use href="#k" x="1127" y="682"/><use href="#K" x="1109" y="681"/><use href="#k" x="989" y="688"/><use href="#K" x="1004" y="697"/><use href="#k" x="1033" y="731"/><use href="#K" x="994" y="738"/><use href="#k" x="1123" y="713"/><use href="#K" x="1140" y="706"/><use href="#K" x="1148" y="658"/><use href="#k" x="1158" y="530"/>
<use href="#K" x="1218" y="646"/><use href="#K" x="1241" y="645"/><use href="#k" x="1180" y="651"/><use href="#K" x="1212" y="609"/><use href="#k" x="1227" y="615"/><use href="#k" x="1180" y="688"/><use href="#k" x="1233" y="688"/>
<use href="#k" x="1006" y="766"/><use href="#k" x="1052" y="766"/><use href="#k" x="1058" y="766"/><use href="#k" x="1086" y="766"/><use href="#k" x="1092" y="766"/><use href="#k" x="1113" y="766"/><use href="#k" x="1120" y="766"/><use href="#K" x="980" y="786"/><use href="#k" x="1048" y="814"/><use href="#k" x="1069" y="814"/><use href="#K" x="1125" y="819"/><use href="#K" x="1299" y="691"/><use href="#K" x="1289" y="713"/>
<!-- connector end caps + misc dark strokes -->
<g fill="#555">
<rect x="556" y="325" width="3" height="14"/><rect x="556" y="368" width="3" height="14"/><rect x="952" y="220" width="3" height="14"/><rect x="916" y="303" width="3" height="14"/><rect x="1315" y="383" width="3" height="14"/>
</g>
<g stroke="#999" stroke-width=".9">
<rect x="595" y="325" width="5" height="14"/><rect x="595" y="368" width="5" height="14"/><rect x="911" y="220" width="6" height="14"/><rect x="955" y="303" width="5" height="14"/><rect x="995" y="311" width="6" height="14"/><rect x="1350" y="383" width="8" height="14"/>
<path d="M1193 234V200H1195V189A7 7 0 0 1 1208 189V200H1211V234ZM1193 200H1211M1195 195H1208"/>
<rect x="917" y="362" width="15" height="45"/><rect x="1181" y="245" width="15" height="45"/><rect x="1351" y="281" width="15" height="42"/>
<rect x="1282" y="733" width="27" height="27" stroke="#111" stroke-width="1.500"/>
<path d="M1282 745l8-12M1309 745l-8-12" stroke="#444"/>
<rect x="725.500" y="809.500" width="16" height="7" stroke="#222" stroke-width="1.200"/>
<rect x="1080" y="549" width="15" height="18" stroke="#444" stroke-width="1.200"/>
</g>
<g fill="#444"><rect x="917" y="362" width="15" height="2.500"/><rect x="1181" y="245" width="15" height="2.500"/><rect x="1351" y="281" width="15" height="2.500"/></g>
<!-- triangles -->
<path fill="#444" d="M587 232l8 0 0 10zM573 305l9-7-9-7zM706 386l-8-6v12zM958 252l-8 5 8 5zM795 383h11l-5.500-9zM891 468v12l-8-6zM945 432h10l-5 7zM1043 410l5-7 5 7zM1100 386l8-5-8-6zM1173 425v12l-8-6zM1163 462h11l-5.500 8zM1232 426l8 7h-10zM1216 490l8 6-8 6zM1002 397h12l-6-9zM1277 398l8-5v10zM1289 437l8 0 0 9zM1290 490l7-6v10zM1345 500h12l-6 7zM1325 554l8 7h-16zM1319 632l8-7h-8zM1127 535h8l-4 7zM1230 564h-11l6 8zM1218 533h10l-5 6zM1232 546v8l8-4zM1274 577h-10l5 6zM1186 640h11l-5.500 7zM1274 633h-14l7-9zM1020 622l6 8h-12zM1062 546l-5 8h10zM1146 620v12l-8-6zM1156 700h-12l6-9zM1103 710l8-6v12zM1028 719h-11l5.500-8zM1187 684l8-7v14zM1242 684l8-7v14zM1186 723l8-7v14zM1010 556h-10l5 6zM1037 556h-10l5 6zM1000 577l8-5v10zM1097 590l-8 0 4 8zM1020 788h12l-6-9zM1198 810h9l-5-9zM1138 718l8 10h-12zM1139 664l8-5v10zM619 604v12l-8-6zM631 690l-8 0v14zM653 705l8 0-4 8zM686 802h12l-6-9zM865 800h11l-5.500 8zM947 760h12l-6 9zM589 784h8l0-11zM670 440l-8 8v-8zM787 660l5-8 5 8z"/>
<rect x="679" y="375" width="4" height="6" fill="none" stroke="#bbb"/>

<!-- large text -->
<text class="d" x="681" y="459" font-size="40" textLength="82" lengthAdjust="spacingAndGlyphs">SH306</text>
<text class="d" x="1091" y="452" font-size="38" textLength="82" lengthAdjust="spacingAndGlyphs">SH305</text>
<text class="d" x="1083" y="431" font-size="16" textLength="29" lengthAdjust="spacingAndGlyphs">U500</text>
<text class="d" transform="rotate(90 752 614)" x="752" y="614" font-size="44" textLength="63" lengthAdjust="spacingAndGlyphs">U804</text>
<text class="d" x="740" y="671" font-size="36" textLength="81" lengthAdjust="spacingAndGlyphs">SH303</text>
<text class="d" x="1059" y="628" font-size="17" textLength="36" lengthAdjust="spacingAndGlyphs">SH300</text>
<text class="d" x="1045" y="640" font-size="16" textLength="30" lengthAdjust="spacingAndGlyphs">U300</text>
<text transform="rotate(90 1292 473)" x="1292" y="473" font-size="16" style="fill:#222" textLength="38" lengthAdjust="spacingAndGlyphs">SH304</text>

<!-- medium labels -->
<text transform="rotate(180 838 391)" x="838" y="391" font-size="19" textLength="34" lengthAdjust="spacingAndGlyphs">J1502</text>
<text x="842" y="461" font-size="19" textLength="33" lengthAdjust="spacingAndGlyphs">J1503</text>
<text x="824" y="792" font-size="19" textLength="33" lengthAdjust="spacingAndGlyphs">J1101</text>
<text transform="rotate(180 1072 796)" x="1072" y="796" font-size="19" textLength="26" lengthAdjust="spacingAndGlyphs">J701</text>
<text transform="rotate(-90 607 721)" x="607" y="721" font-size="20" textLength="28" lengthAdjust="spacingAndGlyphs">J600</text>
<text transform="rotate(-90 1125 291)" x="1125" y="291" font-size="17" textLength="33" lengthAdjust="spacingAndGlyphs">J1504</text>
<text transform="rotate(-90 689 387)" x="689" y="387" font-size="12" textLength="24" lengthAdjust="spacingAndGlyphs">J1209</text>
<text x="933" y="227" font-size="9">J1513</text>
<text transform="rotate(180 938 310)" x="938" y="310" font-size="9">J1508</text>
<text x="1018" y="318" font-size="9">J1406</text>
<text transform="rotate(180 578 332)" x="578" y="332" font-size="9">J1206</text>
<text transform="rotate(180 578 375)" x="578" y="375" font-size="9">J1213</text>
<text transform="rotate(180 1336 390)" x="1336" y="390" font-size="9">J1509</text>
<text transform="rotate(90 1053 247)" x="1053" y="247" font-size="9">J1403</text>
<text transform="rotate(90 585 244)" x="585" y="244" font-size="8">DS1501</text>
<text transform="rotate(-90 584 291)" x="584" y="291" font-size="8">DS1500</text>
<text transform="rotate(90 1011 253)" x="1011" y="253" font-size="7">C409</text>
<text transform="rotate(90 940 268)" x="940" y="268" font-size="8">U702</text>
<text transform="rotate(-90 924 385)" x="924" y="385" font-size="9">J1510</text>
<text transform="rotate(-90 1188 268)" x="1188" y="268" font-size="9">J1205</text>
<text transform="rotate(-90 1358 303)" x="1358" y="303" font-size="9">J1510</text>
<text x="1201" y="210" font-size="8">J407</text>
<text x="787" y="432" font-size="7">FL1512</text><text x="817" y="432" font-size="7">FL1509</text><text x="792" y="496" font-size="7">FL1500</text><text x="822" y="496" font-size="7">FL1503</text><text x="762" y="431" font-size="6">L1511</text>
<text transform="rotate(-90 756 453)" x="756" y="453" font-size="6">L1557</text><text transform="rotate(-90 752 475)" x="752" y="475" font-size="6">C1515</text>
<text x="925" y="412" font-size="7">C1589</text><text x="925" y="424" font-size="7">C1588</text><text x="952" y="439" font-size="6">U1501</text>
<text x="635" y="427" font-size="8">R1606</text><text x="666" y="427" font-size="8">C703</text><text x="644" y="492" font-size="8">C690</text>
<text transform="rotate(90 622 479)" x="622" y="479" font-size="7">C832</text><text transform="rotate(-90 623 452)" x="623" y="452" font-size="6">L701</text>
<text x="1111" y="380" font-size="8">Y501</text><text transform="rotate(90 1165 434)" x="1165" y="434" font-size="6">U501</text><text transform="rotate(90 1171 475)" x="1171" y="475" font-size="7">U506</text><text x="1230" y="434" font-size="8">FL503</text><text x="1226" y="491" font-size="6">FL504</text>
<text x="1046" y="478" font-size="7">C500</text><text x="1042" y="492" font-size="6">C524</text><text x="1067" y="492" font-size="6">C524</text><text x="1122" y="492" font-size="6">C523</text><text x="1170" y="397" font-size="6">C514</text><text transform="rotate(90 1288 398)" x="1288" y="398" font-size="11">J500</text>
<text x="1346" y="487" font-size="8">U1510</text><text transform="rotate(180 1326 570)" x="1326" y="570" font-size="11">J102</text><text transform="rotate(180 1310 620)" x="1310" y="620" font-size="7">S101</text>
<text transform="rotate(90 1139 549)" x="1139" y="549" font-size="7">S201</text><text x="1213" y="580" font-size="12" textLength="22" lengthAdjust="spacingAndGlyphs">S100</text><text x="1216" y="538" font-size="6">FL102</text><text transform="rotate(90 1237 542)" x="1237" y="542" font-size="6">FL101</text><text x="1266" y="582" font-size="7">I001</text><text x="1199" y="628" font-size="9">FL210</text><text transform="rotate(-90 1262 618)" x="1262" y="618" font-size="8">FL208</text><text x="1231" y="632" font-size="6">RT202</text>
<text transform="rotate(180 1064 551)" x="1064" y="551" font-size="7">FL214</text><text transform="rotate(180 1136 631)" x="1136" y="631" font-size="8">FL217</text><text transform="rotate(-90 1148 684)" x="1148" y="684" font-size="8">FL213</text><text transform="rotate(180 1112 709)" x="1112" y="709" font-size="7">FL212</text><text transform="rotate(180 1018 729)" x="1018" y="729" font-size="7">FL211</text><text transform="rotate(180 1207 672)" x="1207" y="672" font-size="8">U205</text><text transform="rotate(180 1260 672)" x="1260" y="672" font-size="8">U203</text><text transform="rotate(90 1194 715)" x="1194" y="715" font-size="5">U200</text><text x="1152" y="724" font-size="7">L220</text>
<text transform="rotate(180 1184 797)" x="1184" y="797" font-size="10">U1500</text><text x="1318" y="712" font-size="8.500">TP102</text><text transform="rotate(180 1296 747)" x="1296" y="747" font-size="8">J100</text><text x="1009" y="819" font-size="5.500">TP703</text><text x="894" y="503" font-size="5.500">TP703</text><text x="919" y="502" font-size="5.500">TP704</text>
<text transform="rotate(90 754 730)" x="754" y="730" font-size="7">C965</text><text transform="rotate(90 771 730)" x="771" y="730" font-size="7">C966</text><text transform="rotate(90 788 730)" x="788" y="730" font-size="7">C1742</text><text transform="rotate(90 803 730)" x="803" y="730" font-size="7">C1740</text><text transform="rotate(90 822 730)" x="822" y="730" font-size="7">C982</text><text transform="rotate(90 840 730)" x="840" y="730" font-size="7">C985</text><text transform="rotate(90 858 730)" x="858" y="730" font-size="7">C983</text><text transform="rotate(90 876 730)" x="876" y="730" font-size="7">C984</text><text transform="rotate(90 894 730)" x="894" y="730" font-size="7">C1741</text><text transform="rotate(90 913 730)" x="913" y="730" font-size="7">C1743</text><text transform="rotate(90 931 730)" x="931" y="730" font-size="7">C962</text><text transform="rotate(90 949 730)" x="949" y="730" font-size="7">C961</text>
<text transform="rotate(180 906 553)" x="906" y="553" font-size="8">C803</text><text transform="rotate(90 931 547)" x="931" y="547" font-size="8">C848</text><text transform="rotate(90 899 577)" x="899" y="577" font-size="8">C849</text><text transform="rotate(90 955 600)" x="955" y="600" font-size="7">C804</text><text x="853" y="634" font-size="8">C947</text><text x="861" y="652" font-size="8">C948</text>
<text transform="rotate(-90 608 608)" x="608" y="608" font-size="8">J601</text><text x="619" y="659" font-size="8.500">TP101</text><text x="666" y="752" font-size="11" textLength="28" lengthAdjust="spacingAndGlyphs">C1667</text><text x="622" y="778" font-size="11" textLength="22" lengthAdjust="spacingAndGlyphs">R641</text><text x="586" y="778" font-size="5">C9064</text><text transform="rotate(90 719 782)" x="719" y="782" font-size="10">L1101</text><text transform="rotate(180 693 793)" x="693" y="793" font-size="6">U1100</text><text x="957" y="770" font-size="9">U701</text><text x="694" y="774" font-size="6">L1101</text><text transform="rotate(180 685 814)" x="685" y="814" font-size="6">J1113</text><text transform="rotate(90 904 777)" x="904" y="777" font-size="6">FL1101</text><text transform="rotate(90 904 807)" x="904" y="807" font-size="6">FL1102</text>
<text x="612" y="534" font-size="4.500">TP609</text><text x="579" y="673" font-size="4.500">TP607</text><text x="640" y="677" font-size="4.500">TP613</text><text x="580" y="760" font-size="4.500">TP614</text><text x="616" y="760" font-size="4.500">TP606</text><text x="870" y="828" font-size="4.500">TP701</text><text x="1367" y="542" font-size="4.500">TP1801</text><text x="1370" y="573" font-size="4.500">TP1804</text>

<!-- red notes -->
<text class="e" x="841" y="376.500">Front camera connector</text>
<text class="e" x="837" y="472.500">Rear camera connector</text>
<text class="e" x="963" y="451.500">Power supply converter</text>
<text class="e" x="653" y="477">Charging chip</text>
<text class="e" x="940" y="281" style="font-size:6.500px;letter-spacing:.3px">mic</text>
<text class="e" x="1049" y="272" style="font-size:4px">NFC connector</text>
<text class="e" x="1149" y="311" style="font-size:4.200px">Sensing distance connector</text>
<text class="e" x="1085" y="413" style="font-size:5px">WiFi Bluetooth</text>
<text class="e" x="1346" y="494" style="font-size:3.800px">compass</text>
<text class="e" x="757" y="571.500" style="font-size:5px">Hard disk</text>
<text class="e" x="610" y="585.500">Switch volume connector</text>
<text class="e" x="621" y="741.500">Battery connection base</text>
<text class="e" x="1045" y="659" style="font-size:5px">RF transceiver chip</text>
<text class="e" x="1237" y="662">RF related components</text>
<text class="e" x="1078" y="781.500" style="font-size:4.800px">Tail socket connector</text>
<text class="e" x="1186" y="781" style="font-size:4.800px">gyroscope</text>
<text class="e" x="820" y="802">Display touch connector</text>
<text class="e" x="711" y="822.500">Power supply converter</text>
</g>
</svg>

<!-- footer -->
<div class="a" style="left:0;top:838px;width:1523px;height:20px;background:#0090d8;color:#fff;text-align:center;font-family:'Liberation Mono',monospace;font-size:15.050px;line-height:21px">XZZ Schematics https://www.xzztools.com</div>
</body></html>
